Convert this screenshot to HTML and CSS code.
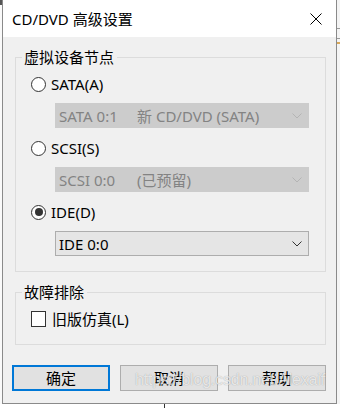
FILE: index.html
```html
<!DOCTYPE html>
<html lang="zh-CN">
<head>
<meta charset="utf-8">
<title>CD/DVD 高级设置</title>
<link rel="stylesheet" href="styles.css">
</head>
<body>
<div class="screen">
  <div class="strip-left"><span class="mark"></span></div>
  <div class="dialog">
    <div class="titlebar">
      <span class="title">CD/DVD 高级设置</span>
      <span class="close">
        <svg width="12" height="12" viewBox="0 0 12 12"><path d="M0.5 0.5 L11.5 11.5 M11.5 0.5 L0.5 11.5" stroke="#000" stroke-width="1" fill="none"/></svg>
      </span>
    </div>
    <div class="body">
      <fieldset class="group group-node">
        <legend>虚拟设备节点</legend>
        <div class="group-inner">
          <div class="opt">
            <div class="row"><span class="radio"></span><span class="label">SATA(A)</span></div>
            <div class="select disabled"><span class="sel-text"><span class="sel-id">SATA 0:1</span>新 CD/DVD (SATA)</span><svg class="chev" width="10" height="6" viewBox="0 0 10 6"><path d="M0.5 0.5 L5 5 L9.5 0.5" fill="none" stroke-width="1"/></svg></div>
          </div>
          <div class="opt">
            <div class="row"><span class="radio"></span><span class="label">SCSI(S)</span></div>
            <div class="select disabled"><span class="sel-text"><span class="sel-id">SCSI 0:0</span>(已预留)</span><svg class="chev" width="10" height="6" viewBox="0 0 10 6"><path d="M0.5 0.5 L5 5 L9.5 0.5" fill="none" stroke-width="1"/></svg></div>
          </div>
          <div class="opt">
            <div class="row"><span class="radio checked"></span><span class="label">IDE(D)</span></div>
            <div class="select"><span class="sel-text">IDE 0:0</span><svg class="chev" width="10" height="6" viewBox="0 0 10 6"><path d="M0.5 0.5 L5 5 L9.5 0.5" fill="none" stroke-width="1"/></svg></div>
          </div>
        </div>
      </fieldset>
      <fieldset class="group group-trouble">
        <legend>故障排除</legend>
        <div class="group-inner2">
          <div class="row"><span class="check"></span><span class="label label-check">旧版仿真(L)</span></div>
        </div>
      </fieldset>
      <div class="buttons">
        <button class="btn default">确定</button>
        <button class="btn">取消</button>
        <button class="btn">帮助</button>
        <span class="watermark">https://blog.csdn.net/Alexaif</span>
      </div>
    </div>
  </div>
  <div class="strip-right"><span class="rl rl1"></span><span class="rl rl2"></span><span class="rl rl3"></span></div>
  <div class="strip-bottom"><span class="bline"></span></div>
</div>
</body>
</html>
```
FILE: styles.css
```css
html, body {
  margin: 0;
  padding: 0;
  background: #ffffff;
}
.screen {
  position: relative;
  width: 340px;
  height: 408px;
  overflow: hidden;
  display: flex;
  flex-wrap: wrap;
  align-content: flex-start;
  font-family: "Noto Sans", "Noto Sans CJK SC", sans-serif;
  font-size: 15px;
  color: #000;
}
.strip-left {
  position: relative;
  width: 2px;
  height: 404px;
  background: #fafafa;
}
.mark {
  position: absolute;
  left: 0;
  top: 0;
  width: 2px;
  height: 5px;
  background: #555;
}
.dialog {
  width: 335px;
  height: 404px;
  box-sizing: border-box;
  border: 1px solid #8a8a8a;
  border-top: none;
  background: #f0f0f0;
  display: flex;
  flex-direction: column;
}
.strip-right {
  position: relative;
  width: 3px;
  height: 404px;
  background: #f4f4f4;
}
.rl {
  position: absolute;
  left: 0;
  width: 3px;
  height: 1px;
  background: #9a9a9a;
}
.rl1 { top: 28px; }
.rl2 { top: 38px; }
.rl3 { top: 42px; height: 2px; background: #d8a85a; }
.strip-bottom {
  position: relative;
  width: 340px;
  height: 4px;
  background: #ffffff;
}
.bline {
  position: absolute;
  left: 164px;
  top: 0;
  width: 1px;
  height: 4px;
  background: #333;
}
.titlebar {
  height: 37px;
  background: #ffffff;
  display: flex;
  align-items: center;
  justify-content: space-between;
  padding: 0 14px 0 9px;
  flex-shrink: 0;
}
.title {
  font-size: 15px;
  line-height: 20px;
  padding-top: 1px;
}
.close {
  display: flex;
  width: 12px;
  height: 12px;
  margin-top: 1px;
}
.body {
  flex: 1;
  padding: 10px 0 0 12px;
  position: relative;
}
.group {
  margin: 0;
  padding: 0;
  width: 311px;
  box-sizing: border-box;
  border: 1px solid #dcdcdc;
  min-width: 0;
}
.group legend {
  margin-left: 6px;
  padding: 0 3px 0 2px;
  line-height: 20px;
  font-size: 15px;
}
.group-inner {
  padding: 7px 0 15px 15px;
}
.opt {
  display: flex;
  flex-direction: column;
}
.opt + .opt {
  margin-top: 10px;
}
.row {
  height: 20px;
  display: flex;
  align-items: center;
}
.radio {
  width: 15px;
  height: 15px;
  box-sizing: border-box;
  border: 1px solid #333;
  border-radius: 50%;
  background: #fff;
  display: flex;
  align-items: center;
  justify-content: center;
  flex-shrink: 0;
}
.radio.checked::after {
  content: "";
  width: 8px;
  height: 8px;
  border-radius: 50%;
  background: #333;
}
.label {
  margin-left: 5px;
  line-height: 20px;
}
.select {
  margin: 9px 0 0 24px;
  width: 254px;
  height: 25px;
  box-sizing: border-box;
  border: 1px solid #adadad;
  background: #e5e5e5;
  display: flex;
  align-items: center;
  justify-content: space-between;
  padding: 0 6px 0 3px;
}
.select.disabled {
  background: #cccccc;
  border-color: #cccccc;
  color: #838383;
}
.sel-text {
  line-height: 20px;
  white-space: nowrap;
}
.sel-id {
  display: inline-block;
  width: 78px;
}
.chev {
  display: block;
  stroke: #333;
}
.select.disabled .chev {
  stroke: #b4b4b4;
}
.group-trouble {
  margin-top: 10px;
}
.group-inner2 {
  padding: 7px 0 15px 15px;
}
.check {
  width: 15px;
  height: 16px;
  box-sizing: border-box;
  border: 1px solid #333;
  background: #fff;
  flex-shrink: 0;
}
.label-check {
  margin-left: 6px;
}
.buttons {
  position: relative;
  display: flex;
  gap: 10px;
  margin: 20px 0 0 -3px;
}
.btn {
  width: 98px;
  height: 26px;
  box-sizing: border-box;
  border: 1px solid #adadad;
  background: #e1e1e1;
  font-family: "Noto Sans CJK SC", sans-serif;
  font-size: 15px;
  color: #000;
  padding: 0;
  line-height: 22px;
}
.btn.default {
  border: 2px solid #0078d7;
}
.watermark {
  position: absolute;
  left: 123px;
  top: 6px;
  font-family: "Liberation Sans", sans-serif;
  font-size: 16px;
  letter-spacing: -0.2px;
  color: rgba(255, 255, 255, 0.75);
  text-shadow: 0 0 1px rgba(0, 0, 0, 0.35);
  white-space: nowrap;
  pointer-events: none;
}
```
